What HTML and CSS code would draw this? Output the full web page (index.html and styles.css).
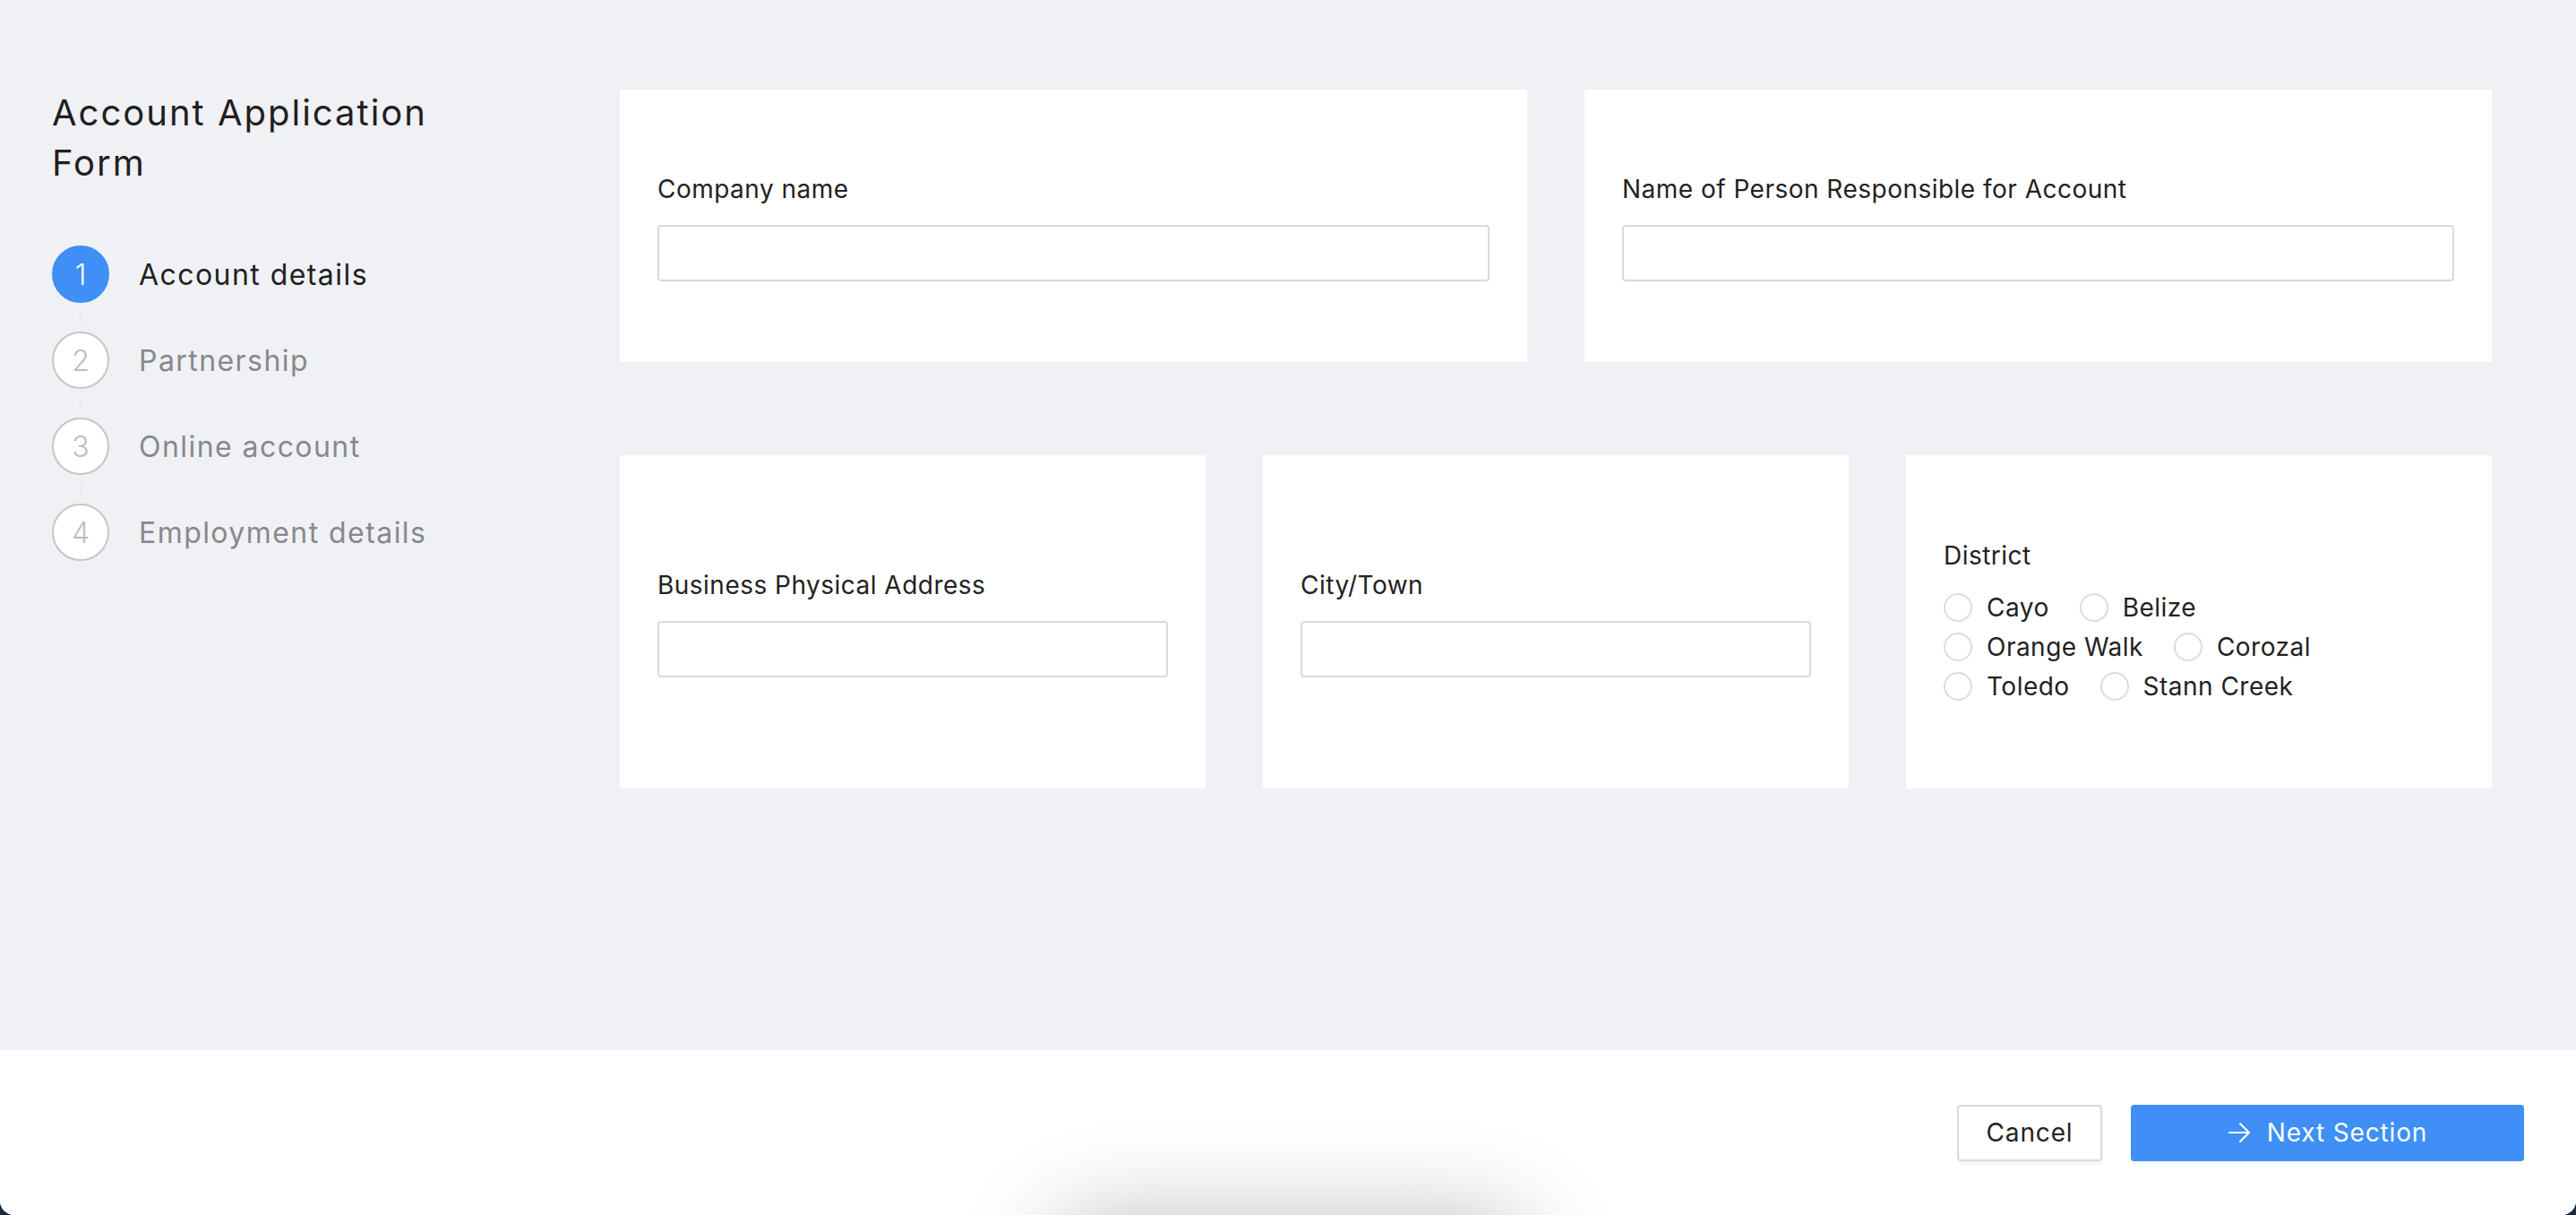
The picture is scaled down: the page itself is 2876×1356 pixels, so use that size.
FILE: index.html
```html
<!DOCTYPE html>
<html lang="en">
<head>
<meta charset="utf-8">
<title>Account Application Form</title>
<link rel="stylesheet" href="styles.css">
</head>
<body>
<div class="app">
  <div class="main">
    <aside class="sidebar">
      <h1 class="title">Account Application Form</h1>
      <ol class="steps">
        <li class="step active"><span class="num">1</span><span class="step-label">Account details</span></li>
        <li class="connector"></li>
        <li class="step"><span class="num">2</span><span class="step-label">Partnership</span></li>
        <li class="connector"></li>
        <li class="step"><span class="num">3</span><span class="step-label">Online account</span></li>
        <li class="connector"></li>
        <li class="step"><span class="num">4</span><span class="step-label">Employment details</span></li>
      </ol>
    </aside>
    <section class="content">
      <div class="row row-2">
        <div class="card">
          <label class="label">Company name</label>
          <div class="input"></div>
        </div>
        <div class="card">
          <label class="label">Name of Person Responsible for Account</label>
          <div class="input"></div>
        </div>
      </div>
      <div class="row row-3">
        <div class="card tall">
          <label class="label">Business Physical Address</label>
          <div class="input"></div>
        </div>
        <div class="card tall">
          <label class="label">City/Town</label>
          <div class="input"></div>
        </div>
        <div class="card tall">
          <label class="label label-district">District</label>
          <div class="radios">
            <div class="radio-row"><span class="radio"><i class="dot"></i>Cayo</span><span class="radio"><i class="dot"></i>Belize</span></div>
            <div class="radio-row"><span class="radio"><i class="dot"></i>Orange Walk</span><span class="radio"><i class="dot"></i>Corozal</span></div>
            <div class="radio-row"><span class="radio"><i class="dot"></i>Toledo</span><span class="radio"><i class="dot"></i>Stann Creek</span></div>
          </div>
        </div>
      </div>
    </section>
  </div>
  <footer class="footer">
    <button class="btn btn-cancel">Cancel</button>
    <button class="btn btn-next">
      <svg class="arrow" width="26" height="24" viewBox="0 0 26 24" fill="none" stroke="#fff" stroke-width="2" stroke-linecap="round" stroke-linejoin="round"><path d="M2 12H24M14 2L24 12L14 22"/></svg>
      <span>Next Section</span>
    </button>
    <div class="floating-shadow"></div>
  </footer>
</div>
</body>
</html>
```
FILE: styles.css
```css
* { box-sizing: border-box; }
html, body {
  margin: 0;
  padding: 0;
  background: #1a2a3a;
}
body {
  font-family: "Inter", "Open Sans", sans-serif;
  color: #222;
  letter-spacing: 0.03em;
}
.app {
  width: 2876px;
  height: 1356px;
  background: #f0f1f5;
  border-radius: 0 0 16px 16px;
  overflow: hidden;
  display: flex;
  flex-direction: column;
  position: relative;
}
.main {
  height: 1172px;
  display: flex;
}
.sidebar {
  width: 692px;
  padding: 98px 0 0 58px;
}
.title {
  margin: 0;
  font-size: 40px;
  line-height: 56px;
  font-weight: 400;
  letter-spacing: 0.05em;
  color: #1f1f1f;
  width: 480px;
}
.steps {
  list-style: none;
  margin: 64px 0 0 0;
  padding: 0;
  display: flex;
  flex-direction: column;
}
.step {
  display: flex;
  align-items: center;
  height: 64px;
  gap: 33px;
}
.connector {
  width: 2px;
  height: 32px;
  margin-left: 31px;
  background: linear-gradient(#f0f1f5 0 10px, #e8e9ee 10px 22px, #f0f1f5 22px);
}
.num {
  width: 64px;
  height: 64px;
  border-radius: 50%;
  border: 2px solid #c6c6c8;
  background: #fff;
  color: #bdbdbf;
  display: flex;
  align-items: center;
  justify-content: center;
  font-size: 32px;
  font-weight: 300;
  letter-spacing: 0;
  flex: none;
}
.step-label {
  font-size: 32px;
  letter-spacing: 0.045em;
  color: #88888c;
}
.step.active .num {
  background: #3f8ff6;
  border-color: #3f8ff6;
  color: #fff;
}
.step.active .step-label {
  color: #1f1f1f;
}
.content {
  width: 2090px;
  padding-top: 100px;
  display: flex;
  flex-direction: column;
  gap: 104px;
}
.row {
  display: grid;
  gap: 64px;
}
.row-2 { grid-template-columns: 1fr 1fr; }
.row-3 { grid-template-columns: 1fr 1fr 1fr; }
.card {
  background: #fff;
  height: 304px;
  padding: 0 42px;
  display: flex;
  flex-direction: column;
  justify-content: center;
}
.card.tall { height: 372px; }
.label {
  font-size: 28px;
  line-height: 40px;
  color: #222;
  margin-bottom: 20px;
}
.label-district { margin-bottom: 16px; }
.input {
  height: 63px;
  border: 2px solid #dadada;
  border-radius: 4px;
  background: #fff;
}
.radios {
  display: flex;
  flex-direction: column;
}
.radio-row {
  display: flex;
  height: 44px;
  align-items: center;
  gap: 34px;
}
.radio {
  display: flex;
  align-items: center;
  gap: 16px;
  font-size: 28px;
  color: #222;
}
.dot {
  width: 32px;
  height: 32px;
  border-radius: 50%;
  border: 2px solid #dcdcdc;
  flex: none;
}
.footer {
  height: 184px;
  background: #fff;
  display: flex;
  justify-content: flex-end;
  align-items: center;
  gap: 32px;
  padding-right: 58px;
  position: relative;
}
.btn {
  font-family: inherit;
  letter-spacing: 0.03em;
  font-size: 28px;
  height: 63px;
  border-radius: 4px;
  cursor: pointer;
  box-shadow: 0 4px 3px rgba(0, 0, 0, 0.04);
}
.btn-cancel {
  width: 162px;
  background: #fff;
  border: 2px solid #dadada;
  color: #222;
}
.btn-next {
  width: 439px;
  background: #3f8ff6;
  border: none;
  color: #fff;
  display: flex;
  align-items: center;
  justify-content: center;
  gap: 18px;
}
.arrow { display: block; }
.floating-shadow {
  position: absolute;
  left: 1180px;
  width: 520px;
  top: 194px;
  height: 120px;
  background: #fff;
  box-shadow: 0 0 110px 0 rgba(0, 0, 0, 0.3);
  border-radius: 40px;
}
```
